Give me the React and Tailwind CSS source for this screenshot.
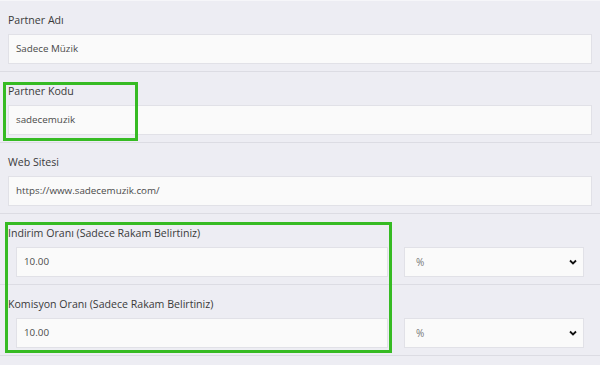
const FONT = { fontFamily: '"Open Sans", "Liberation Sans", sans-serif' };

function Field({ label, value }) {
  return (
    <div className="h-[71px] border-b border-[#dcdce3] px-2 pt-[11px]">
      <p className="h-[16px] text-[10.6px] leading-[16px] text-[#3a3a3a]">{label}</p>
      <div className="mt-[6px] flex h-[30px] items-center border border-[#e1e1e7] bg-[#fafafa] pl-[7px] text-[9.8px] text-[#4a4a4a]">
        {value}
      </div>
    </div>
  );
}

function RateField({ label, value }) {
  return (
    <div className="h-[71px] border-b border-[#dcdce3] pt-[11px]">
      <p className="h-[16px] px-2 text-[10.6px] leading-[16px] text-[#3a3a3a]">{label}</p>
      <div className="mt-[6px] flex gap-[16px] pl-[16px]">
        <div className="flex h-[30px] w-[372px] items-center border border-[#e1e1e7] bg-[#fafafa] pl-[7px] text-[9.8px] text-[#4a4a4a]">
          {value}
        </div>
        <div className="flex h-[30px] w-[180px] items-center justify-between border border-[#e1e1e7] bg-[#fafafa] pl-[11px] pr-[5px] text-[10px] text-[#777]">
          <span>%</span>
          <svg width="10" height="10" viewBox="0 0 10 10">
            <path d="M2 3.5 L5 6.5 L8 3.5" fill="none" stroke="#111" strokeWidth="1.8" />
          </svg>
        </div>
      </div>
    </div>
  );
}

export default function App() {
  return (
    <div className="relative h-[365px] w-[600px] overflow-hidden bg-[#ededf3]" style={FONT}>
      <div className="h-[1px] bg-[#f6f6f9]" />
      <Field label="Partner Adı" value="Sadece Müzik" />
      <Field label="Partner Kodu" value="sadecemuzik" />
      <Field label="Web Sitesi" value="https://www.sadecemuzik.com/" />
      <RateField label="Indirim Oranı (Sadece Rakam Belirtiniz)" value="10.00" />
      <RateField label="Komisyon Oranı (Sadece Rakam Belirtiniz)" value="10.00" />

      {/* annotation boxes */}
      <div className="absolute left-[3px] top-[82px] h-[59px] w-[135px] border-[3px] border-[#36bb23]" />
      <div className="absolute left-[5px] top-[222px] h-[131px] w-[387px] border-[3px] border-[#36bb23]" />
    </div>
  );
}
